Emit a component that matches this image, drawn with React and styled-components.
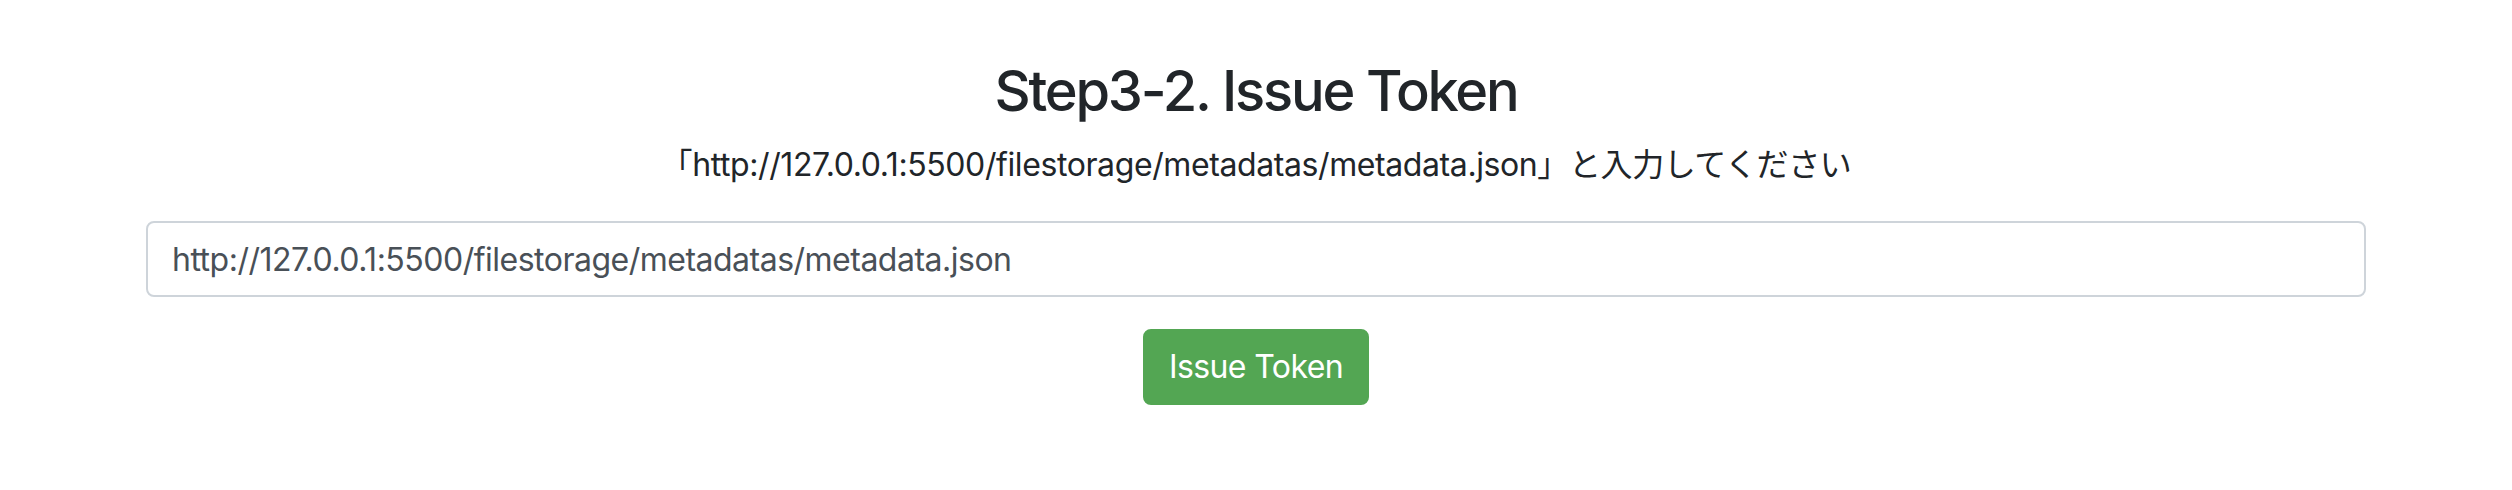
import React from 'react';
import styled, { createGlobalStyle } from 'styled-components';

const GlobalStyle = createGlobalStyle`
  body {
    margin: 0;
    background: #fff;
    color: #212529;
    font-family: Inter, "Noto Sans CJK JP", sans-serif;
  }
`;

const Container = styled.div`
  width: 2220px;
  margin: 0 auto;
  padding-top: 58px;
  text-align: center;
`;

const Title = styled.h3`
  margin: 0 0 16px;
  font-size: 56px;
  font-weight: 500;
  line-height: 67.2px;
  letter-spacing: -2.2px;
`;

const Lead = styled.p`
  margin: 0 0 32px;
  font-size: 32px;
  line-height: 48px;
  letter-spacing: -0.4px;
`;

const UrlInput = styled.input`
  display: block;
  width: 100%;
  height: 76px;
  box-sizing: border-box;
  padding: 12px 24px;
  font-family: inherit;
  font-size: 32px;
  line-height: 48px;
  letter-spacing: -0.5px;
  color: #495057;
  background: #fff;
  border: 2px solid #ced4da;
  border-radius: 8px;
  outline: none;
`;

const Button = styled.button`
  margin-top: 32px;
  padding: 12px 24px;
  font-family: inherit;
  font-size: 32px;
  line-height: 48px;
  letter-spacing: -0.6px;
  color: #fff;
  background: ${(p) => p.bg || '#53a653'};
  border: 2px solid ${(p) => p.bg || '#53a653'};
  border-radius: 8px;
  cursor: pointer;
`;

export default function App() {
  return (
    <>
      <GlobalStyle />
      <Container>
        <Title>Step3-2. Issue Token</Title>
        <Lead>「http://127.0.0.1:5500/filestorage/metadatas/metadata.json」と入力してください</Lead>
        <UrlInput defaultValue="http://127.0.0.1:5500/filestorage/metadatas/metadata.json" />
        <Button>Issue Token</Button>
      </Container>
    </>
  );
}
